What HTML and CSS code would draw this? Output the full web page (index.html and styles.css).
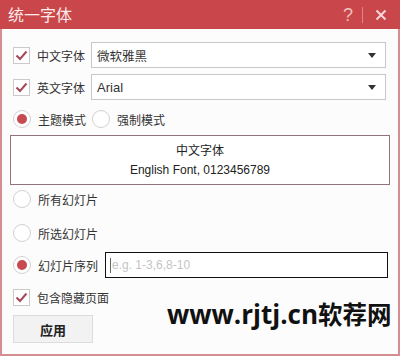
FILE: index.html
```html
<!DOCTYPE html>
<html>
<head>
<meta charset="utf-8">
<link rel="stylesheet" href="styles.css">
</head>
<body>
<div class="dialog">
  <div class="titlebar">
    <span class="title">统一字体</span>
    <div class="title-actions">
      <span class="help">?</span>
      <span class="sep"></span>
      <svg class="close" width="12" height="12" viewBox="0 0 12 12"><path d="M1.5 1.5 L10.5 10.5 M10.5 1.5 L1.5 10.5" stroke="#f6d6d6" stroke-width="2" fill="none"/></svg>
    </div>
  </div>
  <div class="content">
    <div class="row r1">
      <span class="check"><svg width="13" height="11" viewBox="0 0 13 11"><path d="M1.5 5.5 L5 9 L11.5 1.5" stroke="#a64858" stroke-width="2" fill="none"/></svg></span>
      <span class="label">中文字体</span>
      <div class="select"><span>微软雅黑</span><span class="arrow"></span></div>
    </div>
    <div class="row r2">
      <span class="check"><svg width="13" height="11" viewBox="0 0 13 11"><path d="M1.5 5.5 L5 9 L11.5 1.5" stroke="#a64858" stroke-width="2" fill="none"/></svg></span>
      <span class="label">英文字体</span>
      <div class="select"><span class="latin">Arial</span><span class="arrow"></span></div>
    </div>
    <div class="row r3">
      <span class="radio on"></span>
      <span class="label">主题模式</span>
      <span class="radio"></span>
      <span class="label">强制模式</span>
    </div>
    <div class="preview">
      <div>中文字体</div>
      <div class="latin">English Font, 0123456789</div>
    </div>
    <div class="row r4">
      <span class="radio"></span>
      <span class="label">所有幻灯片</span>
    </div>
    <div class="row r5">
      <span class="radio"></span>
      <span class="label">所选幻灯片</span>
    </div>
    <div class="row r6">
      <span class="radio on"></span>
      <span class="label">幻灯片序列</span>
      <div class="input"><span class="caret"></span><span class="placeholder">e.g. 1-3,6,8-10</span></div>
    </div>
    <div class="row r7">
      <span class="check"><svg width="13" height="11" viewBox="0 0 13 11"><path d="M1.5 5.5 L5 9 L11.5 1.5" stroke="#a64858" stroke-width="2" fill="none"/></svg></span>
      <span class="label">包含隐藏页面</span>
    </div>
    <div class="row r8">
      <button class="btn">应用</button>
    </div>
  </div>
  <div class="watermark"><span class="wm-latin">www.rjtj.cn</span><span class="wm-cjk">软荐网</span></div>
</div>
</body>
</html>
```

FILE: styles.css
```css
* { box-sizing: border-box; }
html, body { margin: 0; padding: 0; }
body {
  width: 400px;
  height: 357px;
  background: #fff;
  font-family: "Noto Sans CJK SC", "Noto Sans", sans-serif;
  color: #333;
  overflow: hidden;
}
.dialog {
  position: relative;
  width: 400px;
  height: 356px;
  border: 2px solid #d48e92;
  border-top: none;
  background: #fdfcfc;
}
.titlebar {
  height: 29px;
  margin: 0 -2px;
  background: #c9474b;
  display: flex;
  align-items: center;
  justify-content: space-between;
  padding: 0 13px 0 8px;
}
.title {
  color: #fbeaea;
  font-size: 16px;
  line-height: 29px;
}
.title-actions {
  display: flex;
  align-items: center;
  gap: 9px;
}
.help {
  color: #f0c0c0;
  font-family: "Liberation Sans", sans-serif;
  font-size: 18px;
  line-height: 20px;
}
.sep {
  width: 1px;
  height: 16px;
  background: #dc8486;
}
.close { display: block; margin-left: 3px; }
.content {
  padding: 0 8px;
  display: flex;
  flex-direction: column;
}
.row {
  display: flex;
  align-items: center;
  padding-left: 3px;
}
.label {
  font-size: 12px;
  margin-left: 7px;
  white-space: nowrap;
  color: #333;
}
.check {
  width: 17px;
  height: 17px;
  border: 1px solid #cfc8c8;
  background: #fff;
  display: flex;
  align-items: center;
  justify-content: center;
  flex: none;
}
.radio {
  width: 18px;
  height: 18px;
  border-radius: 50%;
  border: 1px solid #d4d0d0;
  background: #fff;
  flex: none;
  display: flex;
  align-items: center;
  justify-content: center;
}
.radio.on::after {
  content: "";
  width: 10px;
  height: 10px;
  border-radius: 50%;
  background: #c64a50;
}
.r1 { margin-top: 13px; height: 26px; }
.r2 { margin-top: 6px; height: 26px; }
.select {
  flex: none;
  width: 295px;
  height: 26px;
  margin-left: 6px;
  border: 1px solid #c8c8c8;
  background: #fff;
  display: flex;
  align-items: center;
  justify-content: space-between;
  padding: 0 9px 0 5px;
  font-size: 12.5px;
  color: #333;
}
.latin { font-family: "Liberation Sans", Arial, sans-serif; }
.select .latin { font-size: 13px; }
.arrow {
  width: 0;
  height: 0;
  border-left: 4px solid transparent;
  border-right: 4px solid transparent;
  border-top: 5px solid #333;
}
.r3 { margin-top: 8px; height: 22px; }
.r3 .radio + .label + .radio { margin-left: 6px; }
.preview {
  margin-top: 5px;
  height: 50px;
  width: 380px;
  border: 1px solid #8f7480;
  background: #fff;
  display: flex;
  flex-direction: column;
  align-items: center;
  justify-content: center;
  font-size: 12px;
  line-height: 20px;
  color: #222;
}
.preview .latin { font-size: 12px; }
.r4 { margin-top: 3px; height: 22px; }
.r5 { margin-top: 12px; height: 22px; }
.r6 { margin-top: 8px; height: 26px; }
.input {
  margin-left: 7px;
  width: 283px;
  height: 26px;
  border: 1.5px solid #111;
  background: #fff;
  display: flex;
  align-items: center;
  padding-left: 4px;
}
.caret {
  width: 1px;
  height: 15px;
  background: #666;
  margin-right: 1px;
}
.placeholder {
  font-family: "Liberation Sans", Arial, sans-serif;
  font-size: 12px;
  color: #c4c4c4;
}
.r7 { margin-top: 8px; height: 22px; }
.r8 { margin-top: 7px; }
.btn {
  width: 80px;
  height: 28px;
  border: 1px solid #dcdcdc;
  background: #f2f2f2;
  font-family: "Noto Sans CJK SC", sans-serif;
  font-size: 13px;
  font-weight: bold;
  color: #222;
  padding: 0;
}
.watermark {
  position: absolute;
  left: 165px;
  top: 296px;
  display: flex;
  align-items: baseline;
  line-height: 36px;
  color: #111;
  white-space: nowrap;
}
.wm-latin {
  font-family: "Open Sans", "Noto Sans", sans-serif;
  font-weight: bold;
  font-size: 26px;
}
.wm-cjk {
  font-family: "Noto Sans CJK SC", sans-serif;
  font-weight: bold;
  font-size: 24.5px;
  margin-left: 0;
}
```
